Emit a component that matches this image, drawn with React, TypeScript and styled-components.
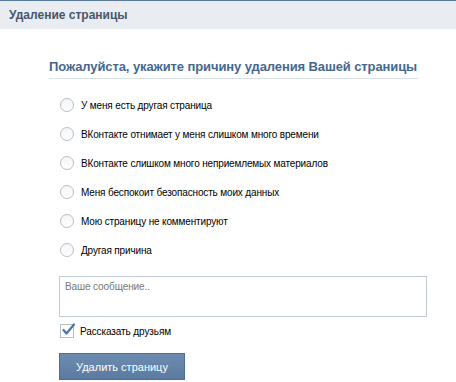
import React from "react";
import styled, { createGlobalStyle } from "styled-components";

const Global = createGlobalStyle`
  html, body { margin: 0; padding: 0; background: #fff; }
  body { font-family: "Liberation Sans", Arial, sans-serif; font-size: 10px; color: #000; }
`;

const Page = styled.div`
  width: 456px;
  height: 382px;
  background: #fff;
  border-top: 1px solid #5b7b9d;
  box-sizing: border-box;
`;

const Header = styled.div`
  height: 28px;
  background: #e9edf1;
  display: flex;
  align-items: center;
  padding-left: 9px;
  font-weight: bold;
  font-size: 12px;
  color: #45566b;
`;

const Body = styled.div`
  padding: 31px 38px 0 49px;
`;

const Title = styled.div`
  font-weight: bold;
  font-size: 13px;
  letter-spacing: -0.1px;
  line-height: 14px;
  white-space: nowrap;
  color: #45688e;
  padding-bottom: 4px;
  border-bottom: 1px solid #dae1e8;
  width: 369px;
`;

const Options = styled.div`
  display: flex;
  flex-direction: column;
  gap: 13px;
  padding: 18px 0 0 11px;
`;

const Option = styled.label`
  display: flex;
  align-items: center;
  gap: 7px;
  height: 16px;
  color: #000;
  font-size: 10px;
  letter-spacing: -0.15px;
`;

const Radio = styled.span`
  width: 12px;
  height: 12px;
  border-radius: 50%;
  border: 1px solid #b7bec6;
  background: linear-gradient(#f4f5f7, #fff);
  box-sizing: content-box;
`;

const Message = styled.div`
  margin: 18px 0 0 10px;
  width: 368px;
  height: 41px;
  border: 1px solid #c0cad5;
  padding: 4px 5px;
  box-sizing: border-box;
  color: #777;
  font-size: 10px;
  letter-spacing: -0.1px;
`;

const CheckRow = styled.div`
  display: flex;
  align-items: center;
  gap: 6px;
  margin: 6px 0 0 11px;
  height: 16px;
  font-size: 10px;
  letter-spacing: -0.1px;
`;

const Check = styled.span`
  width: 12px;
  height: 12px;
  border: 1px solid #b7bec6;
  background: #fff;
  position: relative;
  box-sizing: content-box;
  svg { position: absolute; left: 0; top: -3px; }
`;

const Button = styled.div`
  margin: 14px 0 0 10px;
  width: 126px;
  height: 27px;
  box-sizing: border-box;
  border: 1px solid #4e6d94;
  background: linear-gradient(#6d8cb0, #5a7aa0);
  color: #fff;
  font-size: 11px;
  display: flex;
  align-items: center;
  justify-content: center;
`;

const reasons = [
  "У меня есть другая страница",
  "ВКонтакте отнимает у меня слишком много времени",
  "ВКонтакте слишком много неприемлемых материалов",
  "Меня беспокоит безопасность моих данных",
  "Мою страницу не комментируют",
  "Другая причина",
];

export default function App() {
  return (
    <Page>
      <Global />
      <Header>Удаление страницы</Header>
      <Body>
        <Title>Пожалуйста, укажите причину удаления Вашей страницы</Title>
        <Options>
          {reasons.map((r) => (
            <Option key={r}>
              <Radio />
              {r}
            </Option>
          ))}
        </Options>
        <Message>Ваше сообщение..</Message>
        <CheckRow>
          <Check>
            <svg width="15" height="15" viewBox="0 0 15 15">
              <path d="M2.5 8 L5.5 11.5 L13 2.5" fill="none" stroke="#4a73a6" strokeWidth="2.2" strokeLinecap="round" strokeLinejoin="round" />
            </svg>
          </Check>
          Рассказать друзьям
        </CheckRow>
        <Button>Удалить страницу</Button>
      </Body>
    </Page>
  );
}
